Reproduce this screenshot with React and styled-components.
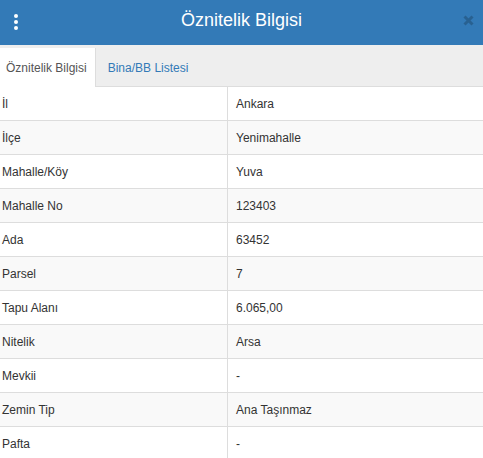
import React, { useState } from 'react';
import styled, { createGlobalStyle } from 'styled-components';

const GlobalStyle = createGlobalStyle`
  html, body {
    margin: 0;
    padding: 0;
    background: #fff;
    font-family: "Liberation Sans", Arial, sans-serif;
    font-size: 12px;
    color: #333;
  }
`;

const Panel = styled.div`
  width: 483px;
  height: 458px;
  overflow: hidden;
  background: #fff;
`;

const Header = styled.div`
  height: 45px;
  background: #337ab7;
  display: grid;
  grid-template-columns: 32px 1fr 32px;
  align-items: center;
`;

const Kebab = styled.button`
  border: 0;
  background: none;
  padding: 0;
  display: flex;
  flex-direction: column;
  align-items: center;
  gap: 2px;
  cursor: pointer;
  margin-top: -2px;
  span {
    width: 4px;
    height: 4px;
    border-radius: 50%;
    background: #fff;
  }
`;

const Title = styled.h1`
  margin: 0;
  text-align: center;
  color: #fff;
  font-size: 18px;
  font-weight: normal;
  margin-top: -4px;
`;

const Close = styled.button`
  border: 0;
  background: none;
  padding: 0;
  display: flex;
  align-items: center;
  justify-content: center;
  cursor: pointer;
  margin-top: -4px;
  margin-left: 2px;
  opacity: 0.2;
  svg {
    display: block;
  }
`;

const TabBar = styled.div`
  height: 42px;
  background: #eee;
  border-bottom: 1px solid #ddd;
  display: flex;
  align-items: flex-end;
  box-sizing: border-box;
`;

const Tab = styled.div`
  height: 39px;
  display: flex;
  align-items: center;
  box-sizing: border-box;
  padding: ${p => (p.$active ? '0 8px 0 6px' : '0 12px')};
  background: ${p => (p.$active ? '#fff' : 'transparent')};
  border-right: 1px solid ${p => (p.$active ? '#ddd' : 'transparent')};
  color: ${p => (p.$active ? '#555' : '#337ab7')};
  cursor: pointer;
  margin-bottom: -1px;
`;

const Table = styled.div`
  display: flex;
  flex-direction: column;
`;

const Row = styled.div`
  display: grid;
  grid-template-columns: 228px 1fr;
  height: 34px;
  box-sizing: border-box;
  border-bottom: 1px solid #ddd;
  background: ${p => (p.$striped ? '#f9f9f9' : '#fff')};
`;

const Cell = styled.div`
  display: flex;
  align-items: center;
  padding-left: ${p => (p.$label ? '2px' : '8px')};
  border-right: ${p => (p.$label ? '1px solid #ddd' : '0')};
  white-space: nowrap;
`;

const rows = [
  ['İl', 'Ankara'],
  ['İlçe', 'Yenimahalle'],
  ['Mahalle/Köy', 'Yuva'],
  ['Mahalle No', '123403'],
  ['Ada', '63452'],
  ['Parsel', '7'],
  ['Tapu Alanı', '6.065,00'],
  ['Nitelik', 'Arsa'],
  ['Mevkii', '-'],
  ['Zemin Tip', 'Ana Taşınmaz'],
  ['Pafta', '-'],
];

const App = () => {
  const [tab, setTab] = useState(0);

  return (
    <>
      <GlobalStyle />
      <Panel>
        <Header>
          <Kebab aria-label="menu">
            <span />
            <span />
            <span />
          </Kebab>
          <Title>Öznitelik Bilgisi</Title>
          <Close aria-label="close">
            <svg width="11" height="11" viewBox="0 0 11 11">
              <path d="M1.5 1.5 L9.5 9.5 M9.5 1.5 L1.5 9.5" stroke="#000" strokeWidth="3" strokeLinecap="butt" />
            </svg>
          </Close>
        </Header>
        <TabBar>
          <Tab $active={tab === 0} onClick={() => setTab(0)}>Öznitelik Bilgisi</Tab>
          <Tab $active={tab === 1} onClick={() => setTab(1)}>Bina/BB Listesi</Tab>
        </TabBar>
        <Table>
          {rows.map(([label, value], i) => (
            <Row key={label} $striped={i % 2 === 1}>
              <Cell $label>{label}</Cell>
              <Cell>{value}</Cell>
            </Row>
          ))}
        </Table>
      </Panel>
    </>
  );
};

export default App;
